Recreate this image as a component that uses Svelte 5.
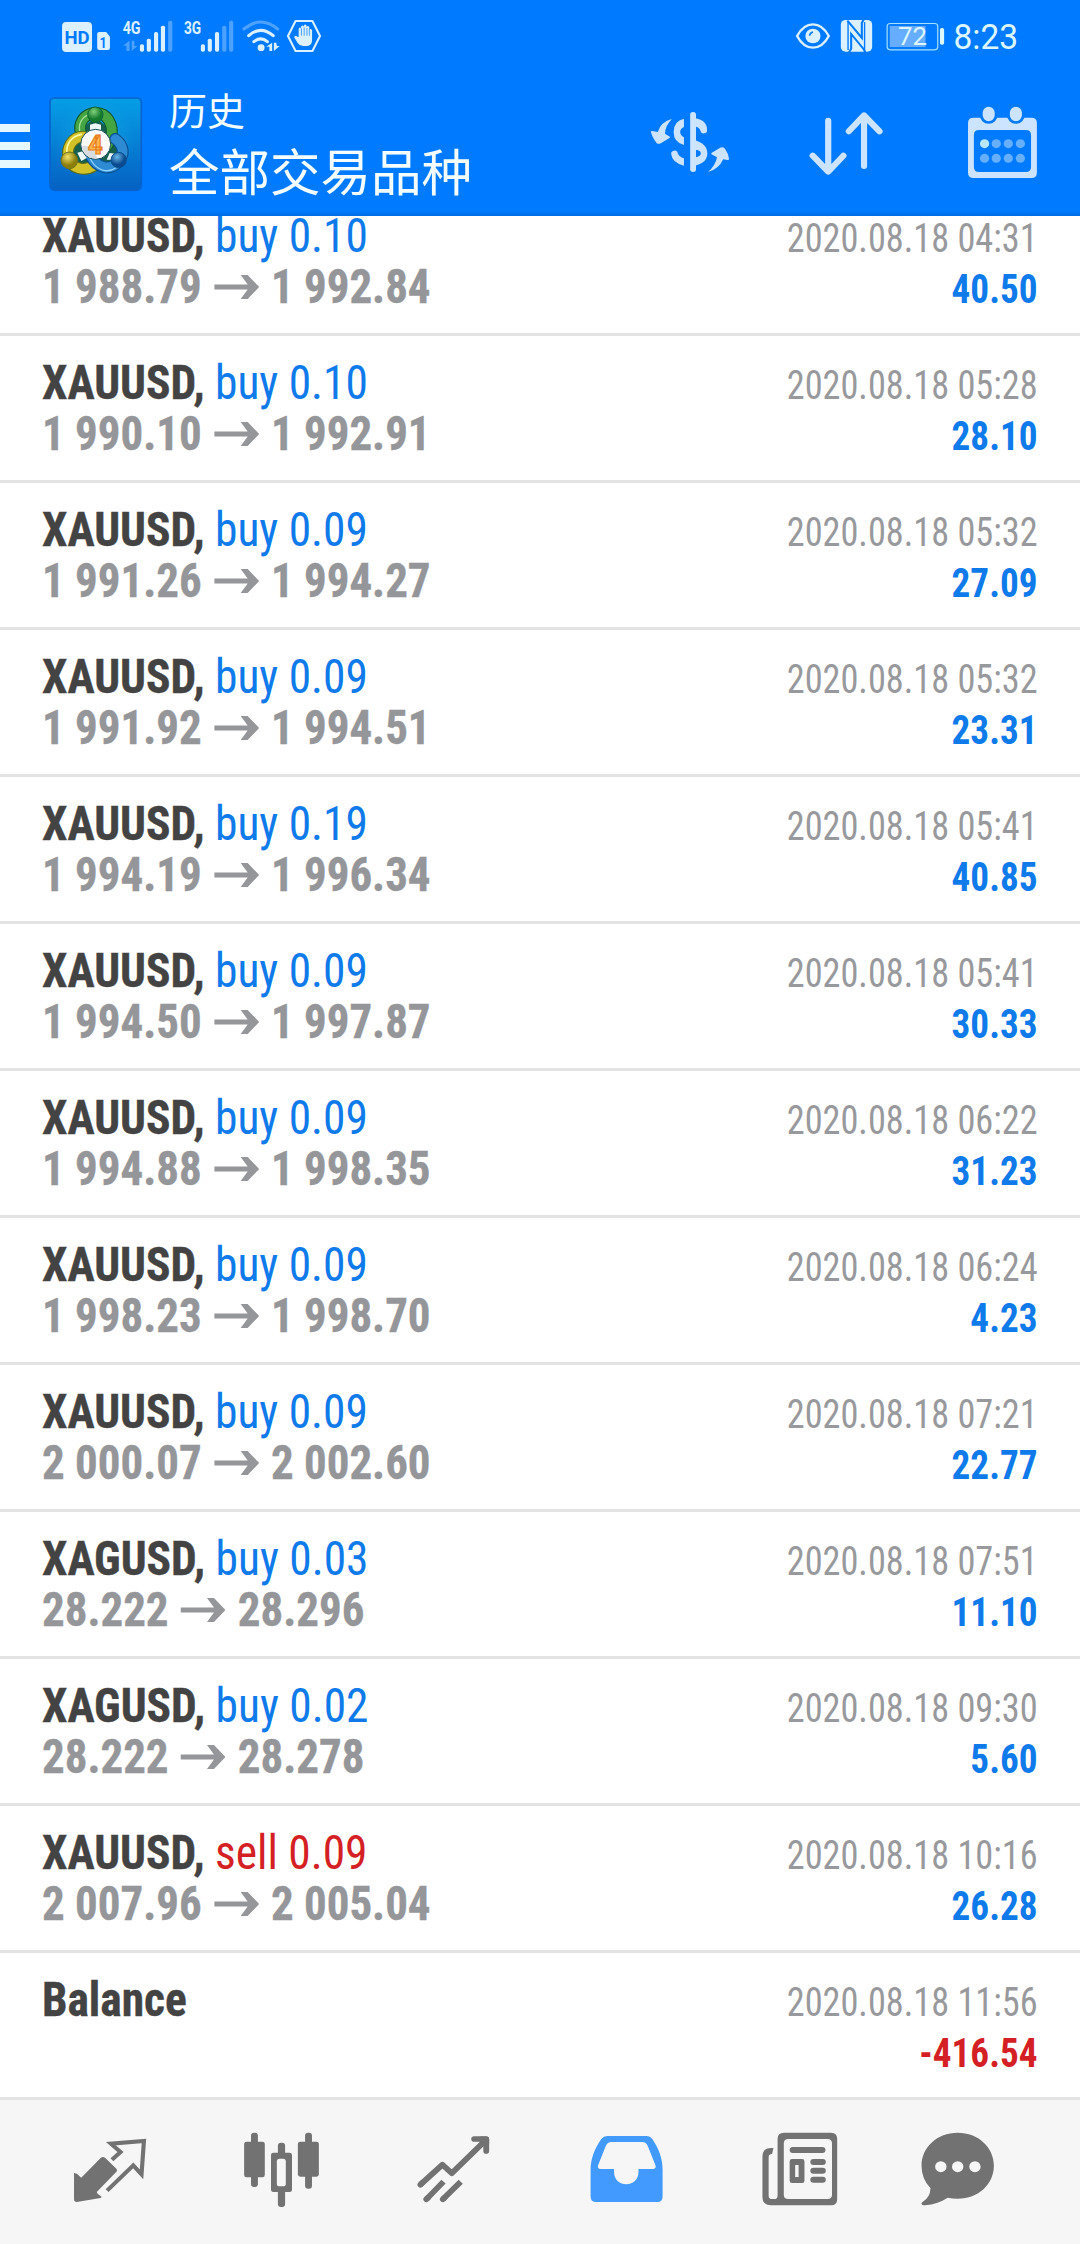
<script lang="ts">
  type Deal = {
    symbol: string;
    side?: "buy" | "sell";
    volume?: string;
    open?: string;
    close?: string;
    time: string;
    profit: string;
  };

  let deals: Deal[] = $state([
    { symbol: "XAUUSD", side: "buy", volume: "0.10", open: "1 988.79", close: "1 992.84", time: "2020.08.18 04:31", profit: "40.50" },
    { symbol: "XAUUSD", side: "buy", volume: "0.10", open: "1 990.10", close: "1 992.91", time: "2020.08.18 05:28", profit: "28.10" },
    { symbol: "XAUUSD", side: "buy", volume: "0.09", open: "1 991.26", close: "1 994.27", time: "2020.08.18 05:32", profit: "27.09" },
    { symbol: "XAUUSD", side: "buy", volume: "0.09", open: "1 991.92", close: "1 994.51", time: "2020.08.18 05:32", profit: "23.31" },
    { symbol: "XAUUSD", side: "buy", volume: "0.19", open: "1 994.19", close: "1 996.34", time: "2020.08.18 05:41", profit: "40.85" },
    { symbol: "XAUUSD", side: "buy", volume: "0.09", open: "1 994.50", close: "1 997.87", time: "2020.08.18 05:41", profit: "30.33" },
    { symbol: "XAUUSD", side: "buy", volume: "0.09", open: "1 994.88", close: "1 998.35", time: "2020.08.18 06:22", profit: "31.23" },
    { symbol: "XAUUSD", side: "buy", volume: "0.09", open: "1 998.23", close: "1 998.70", time: "2020.08.18 06:24", profit: "4.23" },
    { symbol: "XAUUSD", side: "buy", volume: "0.09", open: "2 000.07", close: "2 002.60", time: "2020.08.18 07:21", profit: "22.77" },
    { symbol: "XAGUSD", side: "buy", volume: "0.03", open: "28.222", close: "28.296", time: "2020.08.18 07:51", profit: "11.10" },
    { symbol: "XAGUSD", side: "buy", volume: "0.02", open: "28.222", close: "28.278", time: "2020.08.18 09:30", profit: "5.60" },
    { symbol: "XAUUSD", side: "sell", volume: "0.09", open: "2 007.96", close: "2 005.04", time: "2020.08.18 10:16", profit: "26.28" },
    { symbol: "Balance", time: "2020.08.18 11:56", profit: "-416.54" },
  ]);

  const bars4g = [[412, 133], [432, 116], [453, 96], [473, 77], [494, 62]];
  const bars3g = [[589, 133], [609, 116], [630, 96], [651, 77], [671, 62]];
  const days = [1291, 1325, 1360, 1395];
</script>

<div class="screen">
  <header>
    <div class="status">
      <svg class="status-left" viewBox="174 57 766 102" preserveAspectRatio="none">
        <rect x="180" y="66" width="87" height="90" rx="12" fill="#dcf1ff" />
        <text x="187" y="131" font-size="57" font-weight="700" textLength="73" lengthAdjust="spacingAndGlyphs" fill="#007aff">HD</text>
        <path d="M282 102q0-6 6-6h20l11 14v34q0 6-6 6h-25q-6 0-6-6z" fill="#dcf1ff" />
        <text x="289" y="143" font-size="46" font-weight="700" textLength="21" lengthAdjust="spacingAndGlyphs" fill="#007aff">1</text>
        <text x="356" y="103" font-size="57" font-weight="700" textLength="52" lengthAdjust="spacingAndGlyphs" fill="#dcf1ff">4G</text>
        <path d="M376 122v31h-9v-16h-10zM382 122v31l17-15h-9v-16z" fill="#4da2ff" />
        {#each bars4g as [x, y], i}
          <rect x={x - 6} {y} width="12" height={155 - y} rx="5" fill={i < 4 ? "#dcf1ff" : "#4da2ff"} />
        {/each}
        <text x="534" y="103" font-size="57" font-weight="700" textLength="50" lengthAdjust="spacingAndGlyphs" fill="#dcf1ff">3G</text>
        {#each bars3g as [x, y], i}
          <rect x={x - 6} {y} width="12" height={155 - y} rx="5" fill={i < 3 ? "#dcf1ff" : "#4da2ff"} />
        {/each}
        <g fill="none" stroke="#dcf1ff" stroke-width="9" stroke-linecap="round">
          <path d="M708 87q49-42 98 0" stroke="#4da2ff" />
          <path d="M722 107q35-32 71 0" />
          <path d="M737 125q20-17 39 0" />
        </g>
        <circle cx="758" cy="143" r="10" fill="#dcf1ff" />
        <path d="M790 128v25h-8v-13h-9zM795 128v25l17-15h-8l-2-10z" fill="#dcf1ff" />
        <path d="M858 63h49l22 45-22 45h-49l-22-45z" fill="none" stroke="#dcf1ff" stroke-width="6" stroke-linejoin="round" />
        <path d="M867 111V86q4-7 7 0V80q4-7 8 0v-3q4-7 8 0v4q4-6 8 0v8q4-5 8 1v30q0 18-18 18h-8q-10 0-16-9l-10-17q2-8 9-2z" fill="#dcf1ff" />
        <path d="M875 85v22M883 82v25M891 84v23M898 88v19" stroke="#007aff" stroke-width="2" />
      </svg>
      <svg class="status-right" viewBox="736 57 654 102" preserveAspectRatio="none">
        <path d="M745 108q18-35 46-35t46 35q-18 35-46 35t-46-35z" fill="none" stroke="#dcf1ff" stroke-width="7" />
        <circle cx="791" cy="108" r="22" fill="#dcf1ff" />
        <path d="M781 107q2-9 10-11" fill="none" stroke="#007aff" stroke-width="5" />
        <rect x="872" y="60" width="91" height="95" rx="14" fill="#dcf1ff" />
        <path d="M891 62l5 6 37 46V68l7-12M944 158l-6-11-36-45v44l-6 11" fill="none" stroke="#007aff" stroke-width="6" />
        <path d="M893 66v84M941 66v84" stroke="#007aff" stroke-width="4" />
        <rect x="1006.500" y="70.500" width="147" height="79" rx="9" fill="none" stroke="#a5e0ff" stroke-width="3.500" />
        <rect x="1014" y="78" width="104" height="63" fill="#66adff" />
        <text x="1038" y="135" font-size="77" textLength="84" lengthAdjust="spacingAndGlyphs" fill="#dcf7ff">72</text>
        <rect x="1160" y="84" width="12" height="50" rx="5" fill="#dcf7ff" />
        <text x="1199" y="147" font-size="104" textLength="188" lengthAdjust="spacingAndGlyphs" fill="#dcf7ff">8:23</text>
      </svg>
    </div>

    <div class="bar">
      <div class="menu"><i></i><i></i><i></i></div>
      <svg class="logo" viewBox="24 48 288 288">
        <defs>
          <linearGradient id="tile" x2="0" y2="1"><stop stop-color="#069ee6" /><stop offset="1" stop-color="#0561c3" /></linearGradient>
          <radialGradient id="glow"><stop stop-color="#16b4e8" stop-opacity=".6" /><stop offset="1" stop-color="#16b4e8" stop-opacity="0" /></radialGradient>
          <radialGradient id="green" cx=".4" cy=".3"><stop stop-color="#7fd07a" /><stop offset="1" stop-color="#147a2c" /></radialGradient>
          <radialGradient id="gold" cx=".4" cy=".3"><stop stop-color="#f0e26a" /><stop offset="1" stop-color="#8c7e0a" /></radialGradient>
          <radialGradient id="sky" cx=".4" cy=".3"><stop stop-color="#69b6e5" /><stop offset="1" stop-color="#0a4a90" /></radialGradient>
        </defs>
        <rect x="30" y="54" width="274" height="277" rx="14" fill="url(#tile)" stroke="#0763cf" stroke-width="5" />
        <circle cx="166" cy="180" r="120" fill="url(#glow)" />
        <path d="M125 150l40-40 45 40 40 75-30 35H105L85 220z" fill="#17604f" />
        <g fill="none" stroke-linecap="round">
          <path d="M124 164C112 130 132 101 166 99s57 34 47 76l-14 26" stroke="#0c5a33" stroke-width="36" />
          <path d="M124 164C112 130 132 101 166 99s57 34 47 76l-14 26" stroke="#45a543" stroke-width="29" />
          <path d="M121 162c-10-33 8-52 26-58" stroke="#a5e39a" stroke-width="4" />
          <path d="M130 170C95 170 78 205 86 235s46 40 74 23" stroke="#5c6c19" stroke-width="36" />
          <path d="M130 170C95 170 78 205 86 235s46 40 74 23" stroke="#d2c227" stroke-width="29" />
          <path d="M124 163c-32 6-46 31-43 57" stroke="#fff6a0" stroke-width="5" />
          <path d="M151 225c20 41 59 47 82 23s19-52-7-71" stroke="#07508f" stroke-width="36" />
          <path d="M151 225c20 41 59 47 82 23s19-52-7-71" stroke="#2e8ad3" stroke-width="29" />
          <path d="M151 237c20 36 52 44 77 26" stroke="#8bd2fa" stroke-width="4" />
        </g>
        <path d="M150 134l16-4 17 4v20h-33zM112 218l16-4 12 20-16 9zM200 239l9-20 17 2v19z" fill="#eef8fb" />
        <circle cx="166" cy="104" r="23" fill="url(#green)" stroke="#0c6838" stroke-width="3" />
        <circle cx="88" cy="241" r="25" fill="url(#gold)" stroke="#6d751d" stroke-width="3" />
        <circle cx="236" cy="240" r="23" fill="url(#sky)" stroke="#07508f" stroke-width="3" />
        <circle cx="167" cy="193" r="45" fill="#fafafa" stroke="#164c55" stroke-width="3" />
        <path d="M125 198q40-5 46 37-35 4-46-37z" fill="#d8dce0" />
        <text x="143" y="223" font-size="80" font-weight="700" textLength="46" lengthAdjust="spacingAndGlyphs" fill="#ffb64d" stroke="#e67818" stroke-width="3">4</text>
      </svg>
      <div class="titles">
        <div class="small">历史</div>
        <div class="big">全部交易品种</div>
      </div>
      <div class="actions">
        <svg viewBox="319.4 300 232.3 240" preserveAspectRatio="none" fill="#cce4ff">
          <rect x="436" y="336" width="17" height="180" rx="8" />
          <path d="M418 356Q388 363 388 396q0 31 30 39v-23q-11-6-11-16t11-15z" />
          <path d="M450 355c24 3 36 18 35 34a9.500 9.500 0 0 1-19 3q-4-10-16-13z" />
          <path fill-rule="evenodd" d="M450 421c24 8 36 20 36 39s-12 32-36 37zM452 449v23q15-3 15-12t-15-11z" />
          <path d="M381 463a9.500 9.500 0 0 1 19-3q4 11 18 15v22q-34-8-37-34z" />
          <path d="M383 357q-19 19-20 44l14 9q2 2-1 4l-25 16q-9 4-13-2-13-18-16-33 0-3 4-2l16 3q9-31 41-39z" />
          <path d="M488 516q22-20 26-44l-16-9q-3-2 1-5l24-15q8-4 14 3 11 16 12 31 0 3-4 3l-13-2q-13 30-44 38z" />
        </svg>
        <svg viewBox="772.5 300 232.3 240" preserveAspectRatio="none" fill="none" stroke="#cce4ff" stroke-width="18" stroke-linecap="round" stroke-linejoin="round">
          <path d="M837 362v150M792 467l45 48 44-48M941 498V350M897 394l44-48 45 48" />
        </svg>
        <svg viewBox="1225.5 300 232.3 240" preserveAspectRatio="none">
          <path fill="#cce4ff" fill-rule="evenodd" d="M1259 353h168q16 0 16 16v149q0 16-16 16h-168q-16 0-16-16V369q0-16 16-16zM1275 390q-15 0-15 15v96q0 15 15 15h136q15 0 15-15v-96q0-15-15-15z" />
          <path d="M1303 335v10M1382 335v10" stroke="#007aff" stroke-width="52" stroke-linecap="round" />
          <path d="M1303 338v8M1382 338v8" stroke="#cce4ff" stroke-width="35" stroke-linecap="round" />
          {#each days as x, i}
            <circle cx={x} cy="431" r="13.500" fill={i === 0 ? "#b8e8ff" : "#66afff"} />
            <circle cx={x} cy="475" r="13.500" fill="#66afff" />
          {/each}
        </svg>
      </div>
    </div>
  </header>

  <main>
    <div class="list">
      {#each deals as deal}
        <div class="row">
          <div class="left">
            <div class="title">
              <b>{deal.symbol}{deal.side ? "," : ""}</b>
              {#if deal.side}
                <span class={deal.side}>{deal.side} {deal.volume}</span>
              {/if}
            </div>
            {#if deal.open}
              <div class="prices">
                <span>{deal.open}</span>
                <svg width="48" height="24" viewBox="0 0 45 24" preserveAspectRatio="none"><path d="M0 9.500h33.500L26.500 0h7L45 12 33.500 24h-7l7-9.500H0z" fill="#959699" /></svg>
                <span>{deal.close}</span>
              </div>
            {/if}
          </div>
          <div class="right">
            <div class="time">{deal.time}</div>
            <div class="profit" class:loss={deal.profit.startsWith("-")}>{deal.profit}</div>
          </div>
        </div>
      {/each}
    </div>
  </main>

  <nav>
    <svg viewBox="203.3 150 232.3 240" preserveAspectRatio="none">
      <path d="M293 233q6-4 12 0l33 33q4 4 0 9l-57 61q1 6 14 14 0 3-3 4l-69 12q-8 0-8-8v-79l8 2 13 12z" fill="#727272" />
      <path d="M325 239l25-23-28-25 96-8-7 100-24-27-76 76" fill="none" stroke="#727272" stroke-width="12" />
    </svg>
    <svg viewBox="702.8 150 232.3 240" preserveAspectRatio="none" fill="#727272">
      <rect x="729" y="158" width="20" height="163" rx="9" />
      <rect x="709" y="185" width="60" height="107" rx="7" />
      <rect x="886" y="158" width="20" height="168" rx="9" />
      <rect x="865" y="185" width="61" height="105" rx="7" />
      <rect x="807" y="188" width="21" height="193" rx="9" />
      <rect x="787" y="218" width="61" height="118" rx="7" />
      <rect x="804" y="236" width="26" height="83" rx="8" fill="#f6f6f6" />
    </svg>
    <svg viewBox="1202.3 150 232.3 240" preserveAspectRatio="none" fill="none" stroke="#727272" stroke-width="17" stroke-linejoin="round">
      <path d="M1221 314l64-60 27 26 96-97M1238 358l50-53M1286 358l52-53" />
      <path d="M1221 314l5-5M1238 358l5-5M1286 358l5-5M1377 177h35v36" stroke-linecap="round" />
      <path d="M1398 178h14v14z" fill="#727272" />
    </svg>
    <svg viewBox="133.6 150 232.3 240" preserveAspectRatio="none">
      <path fill="#429aff" fill-rule="evenodd" d="M195 168h115q10 0 16 9c20 30 30 60 30 92v81q0 16-16 16H163q-16 0-16-16v-81c0-32 11-62 31-92q7-9 17-9zM207 186q-11 0-16 12l-22 57q-4 12 8 12h38v9c0 49 71 49 71 0v-9h41q12 0 8-12l-22-57q-5-12-16-12z" />
    </svg>
    <svg viewBox="633.1 150 232.3 240" preserveAspectRatio="none">
      <path fill="#727272" fill-rule="evenodd" d="M709 158h136q18 0 18 18v182q0 18-18 18H671q-25 0-25-25V229q0-25 25-25h7l-4 18q-10 0-10 10v115q0 10 10 10h6q10 0 10-10V176q0-18 19-18zM721 177q-13 0-13 13v154q0 13 13 13h114q13 0 13-13V190q0-13-13-13z" />
      <path d="M734 210h86M794 246h27M794 272h27M794 299h27" stroke="#727272" stroke-width="18" stroke-linecap="round" />
      <path fill="#727272" fill-rule="evenodd" d="M732 237h29q7 0 7 7v58q0 7-7 7h-29q-7 0-7-7v-58q0-7 7-7zM741 255v36h10v-36z" />
    </svg>
    <svg viewBox="1091.9 150 232.3 240" preserveAspectRatio="none">
      <path d="M1213 158c60 0 105 44 105 99s-45 99-105 99q-16 0-29-3-28 19-66 23c-8 1-14-5-7-10q22-13 23-41-26-29-26-68c0-55 45-99 105-99z" fill="#727272" />
      <circle cx="1164" cy="260" r="16.500" fill="#f6f6f6" />
      <circle cx="1213" cy="260" r="16.500" fill="#f6f6f6" />
      <circle cx="1263" cy="260" r="16.500" fill="#f6f6f6" />
    </svg>
  </nav>
</div>

<style>
  :global(body) {
    margin: 0;
    background: #fff;
  }

  .screen {
    display: flex;
    flex-direction: column;
    width: 1080px;
    height: 2244px;
    overflow: hidden;
    font-family: "Roboto Condensed", Roboto, "Noto Sans CJK SC", sans-serif;
    font-stretch: 75%;
  }

  header {
    flex: none;
    height: 216px;
    background: linear-gradient(#007aff 211px, #006ce4);
  }

  svg {
    display: block;
    flex: none;
  }

  .status {
    display: flex;
    justify-content: space-between;
    padding: 19px 61px 0 60px;
    font-family: Roboto, sans-serif;
    font-stretch: normal;
  }

  .status-left {
    width: 263.8px;
    height: 34px;
    overflow: visible;
  }

  .status-right {
    width: 225.2px;
    height: 34px;
    overflow: visible;
  }

  .bar {
    display: flex;
    align-items: flex-start;
    padding-top: 34px;
  }

  .menu {
    display: flex;
    flex-direction: column;
    gap: 10px;
    width: 30px;
    padding-top: 37px;
  }

  .menu i {
    height: 8px;
    background: #e6f8ff;
  }

  .logo {
    width: 96px;
    height: 96px;
    margin: 9px 0 0 18px;
  }

  .titles {
    flex: 1;
    margin: -3px 0 0 25px;
    color: #f4fdff;
    font-family: "Noto Sans CJK SC", sans-serif;
    white-space: nowrap;
  }

  .small {
    font-size: 38px;
    line-height: 50px;
  }

  .big {
    font-size: 50.5px;
    line-height: 70px;
  }

  .actions {
    display: flex;
    gap: 76px;
    padding: 13px 38px 0 0;
  }

  .actions svg,
  nav svg {
    width: 80px;
    height: 80px;
  }

  main {
    flex: 1;
    min-height: 0;
    overflow: hidden;
  }

  .list {
    margin-top: -27px;
  }

  .row {
    display: flex;
    justify-content: space-between;
    box-sizing: border-box;
    height: 147px;
    padding: 21px 42px 0 42px;
    border-bottom: 3px solid #e3e3e3;
    white-space: nowrap;
  }

  .title {
    height: 51px;
    font-size: 48px;
    line-height: 51px;
    color: #434343;
    transform: scaleX(0.946);
    transform-origin: left;
  }

  .title b,
  .prices {
    -webkit-text-stroke: 0.4px;
  }

  .buy {
    color: #0f7aea;
  }

  .sell {
    color: #d41f24;
  }

  .prices {
    display: flex;
    align-items: center;
    gap: 13px;
    font-size: 48px;
    font-weight: 700;
    line-height: 51px;
    color: #959699;
    transform: scaleX(0.936);
    transform-origin: left;
  }

  .right {
    text-align: right;
    font-size: 40px;
    line-height: 51px;
    padding-top: 3px;
  }

  .time {
    color: #98999c;
    transform: scaleX(0.907);
    transform-origin: right;
  }

  .profit {
    font-weight: 700;
    color: #0f7aea;
    transform: scaleX(0.93);
    transform-origin: right;
  }

  .profit.loss {
    color: #d41f24;
  }

  nav {
    display: flex;
    gap: 92px;
    flex: none;
    box-sizing: border-box;
    height: 144px;
    padding: 30px 0 0 70px;
    background: #f6f6f6;
  }

  nav svg:last-child {
    margin-left: -14px;
  }
</style>
